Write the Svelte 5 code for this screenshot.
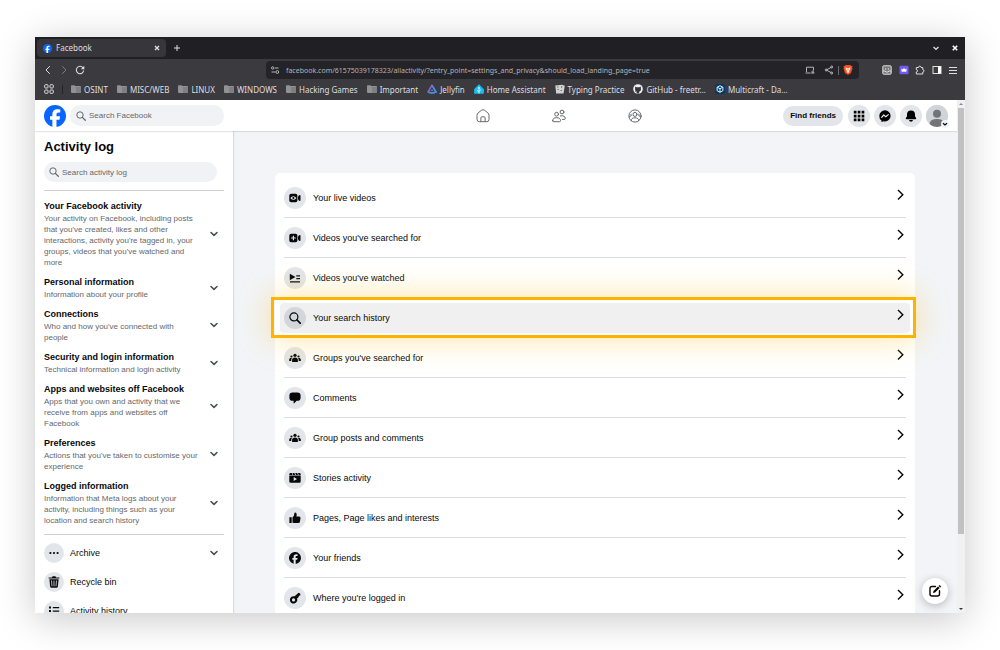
<script>
  const bookmarks = [
    { label: 'OSINT', icon: 'folder' },
    { label: 'MISC/WEB', icon: 'folder' },
    { label: 'LINUX', icon: 'folder' },
    { label: 'WINDOWS', icon: 'folder' },
    { label: 'Hacking Games', icon: 'folder' },
    { label: 'Important', icon: 'folder' },
    { label: 'Jellyfin', icon: 'jellyfin' },
    { label: 'Home Assistant', icon: 'home-assistant' },
    { label: 'Typing Practice', icon: 'typing' },
    { label: 'GitHub - freetr…', icon: 'github' },
    { label: 'Multicraft - Da…', icon: 'multicraft' }
  ];

  const sections = [
    {
      title: 'Your Facebook activity',
      text: "Your activity on Facebook, including posts that you've created, likes and other interactions, activity you're tagged in, your groups, videos that you've watched and more"
    },
    { title: 'Personal information', text: 'Information about your profile' },
    { title: 'Connections', text: "Who and how you've connected with people" },
    { title: 'Security and login information', text: 'Technical information and login activity' },
    {
      title: 'Apps and websites off Facebook',
      text: 'Apps that you own and activity that we receive from apps and websites off Facebook'
    },
    { title: 'Preferences', text: "Actions that you've taken to customise your experience" },
    {
      title: 'Logged information',
      text: 'Information that Meta logs about your activity, including things such as your location and search history'
    }
  ];

  const shortcuts = [
    { label: 'Archive', icon: 'dots', expandable: true },
    { label: 'Recycle bin', icon: 'trash' },
    { label: 'Activity history', icon: 'list' }
  ];

  const rows = [
    { label: 'Your live videos', icon: 'live' },
    { label: "Videos you've searched for", icon: 'video-plus' },
    { label: "Videos you've watched", icon: 'watched' },
    { label: 'Your search history', icon: 'search', active: true },
    { label: "Groups you've searched for", icon: 'groups' },
    { label: 'Comments', icon: 'comment' },
    { label: 'Group posts and comments', icon: 'groups' },
    { label: 'Stories activity', icon: 'stories' },
    { label: 'Pages, Page likes and interests', icon: 'like' },
    { label: 'Your friends', icon: 'facebook' },
    { label: "Where you're logged in", icon: 'key' }
  ];
</script>

{#snippet glyph(name)}
  <svg class="glyph" viewBox="0 0 12 12" aria-hidden="true">
    {#if name === 'live'}
      <path fill-rule="evenodd" d="M2.1 1.7h4.5a1.8 1.8 0 0 1 1.8 1.8v5a1.8 1.8 0 0 1-1.8 1.8H2.1A1.8 1.8 0 0 1 .3 8.500v-5a1.800 1.800 0 0 1 1.800-1.800zM1.300 6Q4.400 2.300 7.500 6 4.400 9.700 1.300 6z" />
      <circle cx="4.400" cy="6" r="1.100" />
      <path d="M9 5q.2-1.600 1.700-2 .8-.1.800.7v4.600q0 .8-.8.700Q9.200 8.600 9 7z" />
    {:else if name === 'video-plus'}
      <path fill-rule="evenodd" d="M2.100 1.700h4.500a1.800 1.800 0 0 1 1.800 1.800v5a1.800 1.800 0 0 1-1.800 1.800H2.100A1.800 1.800 0 0 1 .3 8.500v-5a1.800 1.800 0 0 1 1.800-1.800zM3.800 3.700v1.700H2.100v1.200h1.700v1.700H5V6.600h1.700V5.400H5V3.700z" />
      <path d="M9 5q.2-1.600 1.700-2 .8-.1.800.7v4.600q0 .8-.8.700Q9.200 8.600 9 7z" />
    {:else if name === 'watched'}
      <path d="M.8 1.800 6.500 5 .8 8.200zM7.300 3.300h3.700v1.200H7.300zM7.300 6h3.700v1.200H7.300zM1 9.200h10v1.300H1z" />
    {:else if name === 'search'}
      <circle cx="4.900" cy="4.900" r="4" fill="none" stroke="currentColor" stroke-width="1.200" />
      <path d="m7.900 7.900 3.500 3.500" stroke="currentColor" stroke-width="1.600" stroke-linecap="round" />
    {:else if name === 'groups'}
      <circle cx="6" cy="3.300" r="1.600" />
      <circle cx="2.500" cy="4.500" r="1.100" />
      <circle cx="9.500" cy="4.500" r="1.100" />
      <path d="M3.100 10V8a2.900 2.500 0 0 1 5.800 0v2zM.2 9V7.600c0-1.300 1.200-2 2.700-1.500C2.300 6.900 2.300 8 2.300 9zM11.800 9V7.600c0-1.300-1.200-2-2.700-1.500.6.800.6 1.900.6 2.900z" />
    {:else if name === 'comment'}
      <path d="M3.500.6h5A3.100 3.100 0 0 1 11.600 3.700v2A3.100 3.100 0 0 1 8.500 8.800H7.700L5.200 11.300q-.6.500-.6-.2V8.800H3.500A3.100 3.100 0 0 1 .4 5.700v-2A3.100 3.100 0 0 1 3.500.6z" />
    {:else if name === 'stories'}
      <path d="M.3 2.900V2.500q0-1.400 1.400-1.400h1l.8 1.800zM3.400 1.100h2l.8 1.800h-2zM6.200 1.100h2l.8 1.800H7zM8.900 1.100h1.400q1.400 0 1.400 1.400v.4h-2z" />
      <path fill-rule="evenodd" d="M.3 3.400h11.400v6q0 1.400-1.400 1.400H1.700Q.3 10.800.3 9.400zM4.700 5v4L8 7z" />
    {:else if name === 'like'}
      <path d="M.4 5.200h2.300v5.900H.9q-.5 0-.5-.5zM3.500 5.300q1.800-1 1.800-3.500 0-1.400.9-1.400 1.500 0 1.500 2.300 0 .9-.3 1.800h2.800q1.500 0 1.300 1.500l-.5 3.500q-.2 1.600-1.700 1.600h-4q-1 0-1.800-.7z" />
    {:else if name === 'facebook'}
      <path d="M12 6A6 6 0 1 0 4.600 11.800V7.800H3.300V6h1.300V5.200C4.600 3.200 5.500 2.300 7.400 2.300c.4 0 1 .1 1.200.2v1.600H7.900c-.9 0-1.300.4-1.300 1.300V6h2l-.4 1.800H6.700V12A6 6 0 0 0 12 6z" />
    {:else if name === 'key'}
      <path fill-rule="evenodd" d="m5.600 4.300 3.700-3.300q.5-.4 1 0l1.100 1-.2 1.500-1.400.2-.1 1.300-1.700 1.400a3.700 3.700 0 1 1-2.400-2.100zM4.500 6.300a1.600 1.600 0 1 0 .1 3.200 1.600 1.600 0 0 0-.1-3.200z" />
    {:else if name === 'dots'}
      <circle cx="2.400" cy="6" r="1.100" />
      <circle cx="6" cy="6" r="1.100" />
      <circle cx="9.600" cy="6" r="1.100" />
    {:else if name === 'trash'}
      <path d="M4 1.500Q4 .3 5.200.3h1.600Q8 .3 8 1.500h3q.5 0 .5.500t-.5.500H1q-.5 0-.5-.5T1 1.500z" />
      <path fill-rule="evenodd" d="M1.400 3.200h9.200l-.7 7q-.1 1.500-1.500 1.500H3.600q-1.400 0-1.500-1.500zM3.200 4.500l.4 5.700h.8L4 4.500zM5.600 4.500v5.700h.8V4.500zM8 4.500l-.4 5.700h.8l.4-5.700z" />
    {:else if name === 'list'}
      <path d="M1 1.600h2v2H1zM1 5h2v2H1zM1 8.400h2v2H1zM4.800 2h6.400v1.300H4.800zM4.800 5.400h6.400v1.300H4.800zM4.800 8.800h6.400v1.300H4.800z" />
    {/if}
  </svg>
{/snippet}

{#snippet favicon(name)}
  <svg class="favicon" viewBox="0 0 10 10" aria-hidden="true">
    {#if name === 'folder'}
      <path d="M0 2q0-.8.800-.8h2.600l1 .9h4.800q.8 0 .8.800v5.200q0 .8-.8.800H.8q-.8 0-.8-.8z" fill="#929295" />
      <path d="M5 3h5v5.100q0 .8-.8.800H5z" fill="#808083" />
    {:else if name === 'jellyfin'}
      <path d="M5 1.200 9 8Q5 9.600 1 8z" fill="none" stroke="#8a68cc" stroke-width="1.500" stroke-linejoin="round" />
      <path d="M6 3 9 8Q5 9.600 2 8.400" fill="none" stroke="#3a92dc" stroke-width="1.500" stroke-linecap="round" />
      <path d="m5 4.900 1.300 2.200H3.700z" fill="#7a72d8" />
    {:else if name === 'home-assistant'}
      <path d="M5 .3 9.900 5.200V9q0 .8-.8.800H.9Q.1 9.800.1 9V5.200z" fill="#18bcf2" />
      <path d="M5 9.500V4.500M5 8 2.900 6.200M5 7.300l2-1.700" stroke="#e9f9ff" stroke-width=".8" />
      <circle cx="5" cy="3.900" r=".9" fill="#e9f9ff" />
    {:else if name === 'typing'}
      <path d="M.3 1.500 7 .7l2.800 1-1.300 7.800H1.200z" fill="#d2d2d2" />
      <path d="M2 2.500h1.500v1H2zM6 2.200h1.200v1.500H6zM2.300 5h1.500v1H2.300zM5.500 6h1.500v1H5.500z" fill="#777" />
    {:else if name === 'github'}
      <circle cx="5" cy="5" r="4.800" fill="#f2f2f2" />
      <path d="M3.900 9.400V7.700C2.300 7.200 1.800 6.100 2.100 4.500l.1-1.900 1.600.6h2.400l1.600-.6.1 1.900c.3 1.600-.2 2.700-1.800 3.200v1.700z" fill="#37363b" />
      <path d="M2 7.200q.8.100 1 .8l.9.300" fill="none" stroke="#37363b" stroke-width=".6" />
    {:else if name === 'multicraft'}
      <rect width="10" height="10" rx="1.500" fill="#073b67" />
      <path d="m5 1.700 2.900 1.500v3.500L5 8.300 2.100 6.700V3.200zM2.100 3.200 5 4.700l2.900-1.500M5 4.700v3.500" fill="none" stroke="#dff0fb" stroke-width="1" />
    {/if}
  </svg>
{/snippet}

{#snippet chevronDown()}
  <svg class="chevron-down" viewBox="0 0 10 10" aria-hidden="true">
    <path d="m2 3.500 3 2.900 3-2.900" fill="none" stroke="currentColor" stroke-width="1.600" stroke-linecap="round" stroke-linejoin="round" />
  </svg>
{/snippet}

{#snippet facebookLogo()}
  <svg class="logo" viewBox="0 0 36 36" aria-hidden="true">
    <circle cx="18" cy="18" r="18" fill="#0866ff" />
    <path d="M13.700 35.500V24h-3.800v-5.500h3.800v-2.400c0-6.200 2.800-9.100 8.900-9.100 1.200 0 3.200.2 4 .4v5c-.4 0-1.200-.1-2.100-.1-3 0-4.100 1.100-4.100 4v2.200h5.900l-1 5.500h-4.900v11.800a18 18 0 0 1-6.700-.3z" fill="#fff" />
  </svg>
{/snippet}

{#snippet searchIcon()}
  <svg class="search-icon" viewBox="0 0 10 10" aria-hidden="true">
    <circle cx="4" cy="4" r="3.200" fill="none" stroke="currentColor" stroke-width="1" />
    <path d="m6.400 6.400 2.900 2.900" stroke="currentColor" stroke-width="1.300" stroke-linecap="round" />
  </svg>
{/snippet}

<div class="desktop">
  <div class="window">
    <div class="tabbar">
      <div class="tab">
        {@render facebookLogo()}
        <span class="tab-title">Facebook</span>
        <button class="bare" aria-label="Close tab">
          <svg viewBox="0 0 10 10"><path d="m3 3 4 4M7 3 3 7" stroke-width="1.400" /></svg>
        </button>
      </div>
      <button class="bare new-tab" aria-label="New tab">
        <svg viewBox="0 0 10 10"><path d="M5 2v6M2 5h6" /></svg>
      </button>
      <div class="window-controls">
        <button class="bare" aria-label="Minimise">
          <svg viewBox="0 0 10 10"><path d="m2.500 4 2.500 2.300L7.500 4" stroke-width="1.300" /></svg>
        </button>
        <button class="bare" aria-label="Close window">
          <svg viewBox="0 0 10 10"><path d="m2.800 2.800 4.400 4.400M7.200 2.800 2.800 7.200" stroke="#fff" stroke-width="1.600" /></svg>
        </button>
      </div>
    </div>

    <div class="toolbar">
      <div class="nav-buttons">
        <button class="bare" aria-label="Back">
          <svg viewBox="0 0 10 10"><path d="M6.800 1.200 3 5l3.800 3.800" /></svg>
        </button>
        <button class="bare faded" aria-label="Forward">
          <svg viewBox="0 0 10 10"><path d="M3.200 1.200 7 5 3.200 8.800" /></svg>
        </button>
        <button class="bare" aria-label="Reload">
          <svg viewBox="0 0 10 10"><path d="M8 2.800A3.700 3.700 0 1 0 8.700 5.500" stroke-width="1.100" /><path d="M9.300.8v3.400H5.900z" fill="currentColor" stroke="none" /></svg>
        </button>
      </div>
      <div class="address">
        <svg class="small-icon" viewBox="0 0 10 10" aria-hidden="true">
          <circle cx="2.700" cy="3" r="1.200" />
          <path d="M4.800 3h3.700M1.500 7h3.700" />
          <circle cx="7.300" cy="7" r="1.400" />
        </svg>
        <input
          class="url"
          type="text"
          aria-label="Address"
          value="facebook.com/61575039178323/allactivity/?entry_point=settings_and_privacy&should_load_landing_page=true"
        />
        <button class="bare" aria-label="Install app">
          <svg viewBox="0 0 10 10"><path d="M1.500 7V2.200h7v3.300M.5 8h5M6 8h3.500M7.800 5.500v2M6.700 6.500l1.100 1.200 1.200-1.200" /></svg>
        </button>
        <button class="bare share" aria-label="Share">
          <svg viewBox="0 0 10 10"><path d="M7.500 2.200 2.300 5l5.200 2.800" /><circle cx="7.700" cy="2" r="1" /><circle cx="2.200" cy="5" r="1" /><circle cx="7.700" cy="8" r="1" /></svg>
        </button>
        <span class="divider"></span>
        <button class="bare" aria-label="Brave Shields">
          <svg viewBox="0 0 10 10">
            <path d="M2.600 0h4.800l.9 1 1.200.1L9.100 2.800l.3.900-1.400 4.200L5 10 2 7.900.6 3.700l.3-.9L.5 1.100 1.700 1z" fill="#f5501e" stroke="none" />
            <path d="m2.500 2.600 2.500.6 2.500-.6L7 5 5.600 6.100l.8.800L5 7.900l-1.400-1 .8-.8L3 5z" fill="#fff" stroke="none" />
            <path d="m3.600 3.900 1 .3M6.400 3.900l-1 .3M5 4.200v1.500" stroke="#f5501e" stroke-width=".6" />
          </svg>
        </button>
      </div>
      <div class="extensions">
        <button class="bare" aria-label="Archive extension">
          <svg viewBox="0 0 10 10"><rect x=".8" y=".8" width="8.400" height="8.400" rx="1" fill="#77777a" /><path d="M1 6h2l1 1h2l1-1h2" /><path d="M3 3.500h1.200v1H3zM5.800 3.500H7v1H5.800z" fill="#fff" stroke="none" /></svg>
        </button>
        <button class="bare" aria-label="Crown extension">
          <svg viewBox="0 0 10 10"><rect x=".5" y=".8" width="9" height="8.400" rx="1" fill="#7359f8" stroke="none" /><path d="m2.200 3.400 1.400 1L5 2.900l1.400 1.500 1.400-1-.5 3.400H2.700z" fill="#fff" stroke="none" /></svg>
        </button>
        <button class="bare" aria-label="Extensions">
          <svg viewBox="0 0 10 10"><path d="M1.300 2.500h2.200a1.300 1.300 0 1 1 2.600 0h1.700v2.100a1.200 1.200 0 1 1 0 2.400v2H1.300V7a1.200 1.200 0 0 0 0-2.400z" /></svg>
        </button>
        <button class="bare" aria-label="Side panel">
          <svg viewBox="0 0 10 10"><rect x="1" y="1.500" width="8" height="7" /><path d="M6 1.500h3v7H6z" fill="#fff" stroke="none" /></svg>
        </button>
        <button class="bare" aria-label="Menu">
          <svg viewBox="0 0 10 10"><path d="M1 2.500h8M1 5.500h8M1 8.500h8" /></svg>
        </button>
      </div>
    </div>

    <div class="bookmarks">
      <button class="bare" aria-label="All bookmarks">
        <svg viewBox="0 0 10 10"><rect x=".7" y=".7" width="3.300" height="3.300" rx=".8" /><rect x="6" y=".7" width="3.300" height="3.300" rx=".8" /><rect x=".7" y="6" width="3.300" height="3.300" rx=".8" /><rect x="6" y="6" width="3.300" height="3.300" rx=".8" /></svg>
      </button>
      <span class="bookmarks-divider"></span>
      {#each bookmarks as item}
        <a class="bookmark" href="#bookmark">{@render favicon(item.icon)}{item.label}</a>
      {/each}
    </div>

    <div class="viewport">
      <div class="page">
        <header class="header">
          <a class="home-link" href="#home" aria-label="Facebook">{@render facebookLogo()}</a>
          <label class="search header-search">
            {@render searchIcon()}
            <input type="search" placeholder="Search Facebook" aria-label="Search Facebook" />
          </label>
          <nav class="main-nav">
            <a href="#home" aria-label="Home">
              <svg viewBox="0 0 14 14"><path d="M1 6.200q0-1.400 1.100-2.300L5.600 1.200q1.400-1 2.800 0l3.500 2.700Q13 4.800 13 6.200v4.300q0 2.200-2.200 2.200H3.200Q1 12.700 1 10.500z" /><path d="M4.900 12.500V8.800q0-1 1-1h2.200q1 0 1 1v3.700" /></svg>
            </a>
            <a href="#friends" aria-label="Friends">
              <svg viewBox="0 0 14 14"><circle cx="4.600" cy="5.200" r="1.900" /><circle cx="10" cy="3" r="1.900" /><path d="M.7 11.700c0-2 1.300-3 3.900-3s3.900 1 3.900 3q0 1-1 1H1.700q-1 0-1-1zM8.400 6.900c3-.5 4.900.5 4.900 2.500q0 1-1 1h-1.800" /></svg>
            </a>
            <a href="#groups" aria-label="Groups">
              <svg viewBox="0 0 14 14"><circle cx="7" cy="7" r="6.100" /><circle cx="7" cy="5.400" r="2" /><path d="M3.200 11.700c0-2 1.500-2.900 3.800-2.900s3.800.9 3.800 2.900M3.300 5q-1 .8 0 1.700-1.500.3-2.200 1.300M10.700 5q1 .8 0 1.700 1.500.3 2.200 1.300" /></svg>
            </a>
          </nav>
          <div class="header-actions">
            <button class="find-friends">Find friends</button>
            <button class="round" aria-label="Menu">
              <svg viewBox="0 0 12 12"><path d="M.8.800h2.700v2.700H.8zM4.700.800h2.700v2.700H4.700zM8.600.800h2.700v2.700H8.600zM.8 4.700h2.700v2.700H.8zM4.700 4.700h2.700v2.700H4.700zM8.600 4.700h2.700v2.700H8.600zM.8 8.600h2.700v2.700H.8zM4.700 8.600h2.700v2.700H4.700zM8.600 8.600h2.700v2.700H8.600z" /></svg>
            </button>
            <button class="round" aria-label="Messenger">
              <svg viewBox="0 0 12 12"><path d="M6 .3a5.600 5.600 0 0 1 0 11.200q-.9 0-1.600-.2l-1.500.6q-.4.100-.4-.3l-.1-1.100A5.500 5.500 0 0 1 .3 5.900 5.600 5.600 0 0 1 6 .3z" /><path d="m2.700 7.300 2-2.300 2.100 1.700 2.500-2.100" fill="none" stroke="#e2e5e9" stroke-width="1.200" stroke-linejoin="round" stroke-linecap="round" /></svg>
            </button>
            <button class="round" aria-label="Notifications">
              <svg viewBox="0 0 12 12"><path d="M2 4.400a4 4 0 0 1 8 0v1.900l1.100 1.800q.5 1.200-.8 1.200H1.700Q.4 9.300.9 8.100L2 6.300zM4 10h4q-.3 1.700-2 1.700T4 10z" /></svg>
            </button>
            <button class="round" aria-label="Your profile">
              <svg class="person" viewBox="0 0 22 22"><circle cx="11" cy="11" r="11" fill="#d0d3d8" /><circle cx="11" cy="8.700" r="4" fill="#727477" /><path d="M3.500 19q.5-5 7.500-5t7.500 5A11 11 0 0 1 3.500 19z" fill="#727477" /></svg>
              <span class="avatar-badge">
                <svg class="avatar-chevron" viewBox="0 0 8 8"><path d="M2 3.200 4 5l2-1.800" /></svg>
              </span>
            </button>
          </div>
        </header>

        <div class="content">
          <aside class="sidebar">
            <h1>Activity log</h1>
            <label class="search">
              {@render searchIcon()}
              <input type="search" placeholder="Search activity log" aria-label="Search activity log" />
            </label>
            <hr />
            <div class="sections">
              {#each sections as section}
                <button class="section">
                  <span class="section-body">
                    <span class="section-title">{section.title}</span>
                    <span class="section-text">{section.text}</span>
                  </span>
                  {@render chevronDown()}
                </button>
              {/each}
            </div>
            <hr />
            <div class="shortcuts">
              {#each shortcuts as item}
                <button class="shortcut">
                  <span class="badge badge--small">{@render glyph(item.icon)}</span>
                  <span class="shortcut-label">{item.label}</span>
                  {#if item.expandable}
                    {@render chevronDown()}
                  {/if}
                </button>
              {/each}
            </div>
          </aside>

          <main class="main">
            <div class="card">
              {#each rows as row}
                <a class="row" class:row--active={row.active} href="#activity">
                  <span class="badge">{@render glyph(row.icon)}</span>
                  <span class="row-label">{row.label}</span>
                  <svg class="chevron-right" viewBox="0 0 12 12" aria-hidden="true">
                    <path d="M4 1 8.800 5.700 4 10.500" />
                  </svg>
                </a>
              {/each}
            </div>
          </main>
        </div>
      </div>

      <div class="scrollbar">
        <svg viewBox="0 0 8 8"><path d="m2 5 2-2 2 2z" fill="#888" /></svg>
        <div class="thumb"></div>
        <svg viewBox="0 0 8 8"><path d="m2 3 2 2 2-2z" fill="#333" /></svg>
      </div>

      <button class="compose" aria-label="New message">
        <svg viewBox="0 0 14 14"><path d="M7.500 2.500H4Q2 2.500 2 4.500V10q0 2 2 2h5.500q2 0 2-2V6.800" fill="none" stroke="currentColor" stroke-width="1.400" stroke-linecap="round" /><path d="m5 9 .5-2L10 2.500 11.600 4 7 8.600zM10.600 1.900l.6-.6q.5-.3 1 .1l.5.500q.4.500 0 1l-.6.600z" /></svg>
      </button>
    </div>
  </div>
</div>

<style>
  :global(body) {
    margin: 0;
    background: #fff;
  }

  .desktop {
    box-sizing: border-box;
    height: 100vh;
    padding: 37px 35px;
    font-family: 'Liberation Sans', Arial, sans-serif;
    color: #080809;
  }

  .window {
    display: flex;
    flex-direction: column;
    height: 100%;
    overflow: hidden;
    box-shadow: 0 6px 36px rgba(0, 0, 0, 0.22);
  }

  button,
  input {
    padding: 0;
    border: 0;
    background: none;
    font-family: inherit;
    color: inherit;
  }

  button {
    cursor: pointer;
  }

  a {
    color: inherit;
    text-decoration: none;
  }

  svg {
    display: block;
    flex: none;
  }

  /* Browser chrome */
  .tabbar,
  .toolbar,
  .bookmarks {
    display: flex;
    align-items: center;
    flex: none;
    font-family: 'Noto Sans', sans-serif;
    font-size: 8px;
    color: #dedee0;
  }

  .tabbar {
    height: 22px;
    background: #202024;
  }

  .tab {
    display: flex;
    align-items: center;
    gap: 4px;
    box-sizing: border-box;
    width: 129px;
    height: 18px;
    margin-left: 2px;
    padding: 0 4px 0 6px;
    border-radius: 4px;
    background: #37363b;
    line-height: 10px;
  }

  .tab .logo {
    width: 9px;
    height: 9px;
  }

  .tab-title {
    flex: 1;
  }

  .bare svg,
  .small-icon {
    width: 10px;
    height: 10px;
    fill: none;
    stroke: currentColor;
    stroke-width: 1;
  }

  .new-tab {
    margin-left: 6px;
  }

  .window-controls {
    display: flex;
    gap: 9px;
    margin-left: auto;
    padding-right: 5px;
  }

  .toolbar {
    height: 22px;
    background: #3b3a3f;
  }

  .nav-buttons {
    display: flex;
    gap: 6px;
    box-sizing: border-box;
    width: 231px;
    padding-left: 8px;
  }

  .faded {
    opacity: 0.4;
  }

  .address {
    display: flex;
    align-items: center;
    flex: 1;
    height: 18px;
    padding: 0 6px 0 4px;
    border-radius: 4px;
    background: #242328;
    color: #b4b4b8;
  }

  .url {
    flex: 1;
    min-width: 0;
    margin-left: 6px;
    font-size: 7px;
  }

  .share {
    margin-left: 9px;
  }

  .divider {
    width: 1px;
    height: 9px;
    margin: 0 4px;
    background: #6c6c70;
  }

  .extensions {
    display: flex;
    justify-content: space-between;
    box-sizing: border-box;
    width: 106px;
    padding: 0 7px 0 23px;
  }

  .bookmarks {
    gap: 9px;
    box-sizing: border-box;
    height: 19px;
    padding: 0 9px 3px;
    background: #3b3a3f;
    white-space: nowrap;
    overflow: hidden;
  }

  .bookmarks-divider {
    width: 1px;
    height: 9px;
    margin: 0 -1px;
    background: #242328;
  }

  .bookmark {
    display: flex;
    align-items: center;
    gap: 3px;
  }

  .favicon {
    width: 10px;
    height: 10px;
  }

  /* Page */
  .viewport {
    position: relative;
    display: flex;
    flex: 1;
    min-height: 0;
    background: #f2f4f7;
  }

  .page {
    display: flex;
    flex-direction: column;
    flex: 1;
    min-width: 0;
  }

  .header {
    display: flex;
    align-items: center;
    flex: none;
    z-index: 1;
    height: 31px;
    padding: 0 9px;
    background: #fff;
    box-shadow: 0 1px 1px rgba(0, 0, 0, 0.1);
  }

  .home-link .logo {
    width: 22px;
    height: 22px;
  }

  .search {
    display: flex;
    align-items: center;
    gap: 3px;
    box-sizing: border-box;
    height: 20px;
    padding: 0 6px;
    border-radius: 10px;
    background: #f0f2f5;
    color: #65686c;
  }

  .search input {
    flex: 1;
    min-width: 0;
    font-size: 8px;
    outline: none;
  }

  .search input::placeholder {
    color: #65686c;
  }

  .search-icon {
    width: 10px;
    height: 10px;
  }

  .header-search {
    width: 154px;
    height: 21px;
    margin-left: 4px;
    border-radius: 11px;
  }

  .main-nav {
    display: flex;
    justify-content: center;
    flex: 1;
    padding-left: 111px;
  }

  .main-nav a {
    display: flex;
    justify-content: center;
    width: 76px;
  }

  .main-nav svg {
    width: 14px;
    height: 14px;
    fill: none;
    stroke: #65686c;
    stroke-width: 1;
    stroke-linecap: round;
  }

  .header-actions {
    display: flex;
    align-items: center;
    gap: 4px;
  }

  .find-friends {
    height: 20px;
    margin-right: 1px;
    padding: 0 7px;
    border-radius: 10px;
    background: #e2e5e9;
    font-size: 8px;
    font-weight: 700;
  }

  .round {
    position: relative;
    display: flex;
    align-items: center;
    justify-content: center;
    width: 22px;
    height: 22px;
    border-radius: 50%;
    background: #e2e5e9;
  }

  .round svg {
    width: 12px;
    height: 12px;
  }

  .round .person {
    width: 22px;
    height: 22px;
  }

  .avatar-badge {
    position: absolute;
    right: -1px;
    bottom: -1px;
    border-radius: 50%;
    background: #f0f2f5;
  }

  .round .avatar-chevron {
    width: 8px;
    height: 8px;
    fill: none;
    stroke: currentColor;
    stroke-width: 1.3;
  }

  .content {
    display: flex;
    flex: 1;
    min-height: 0;
  }

  /* Sidebar */
  .sidebar {
    box-sizing: border-box;
    width: 198px;
    flex: none;
    padding: 7px 9px 0;
    overflow: hidden;
    background: #fff;
    box-shadow: 1px 0 1px rgba(0, 0, 0, 0.1);
  }

  h1 {
    margin: 0 0 6px;
    font-size: 13px;
    line-height: 18px;
  }

  .sidebar .search {
    margin-right: 7px;
    padding-left: 5px;
  }

  hr {
    margin: 8px 0;
    border: 0;
    border-top: 1px solid #ced0d4;
  }

  .sections {
    display: flex;
    flex-direction: column;
    gap: 7px;
  }

  .section,
  .shortcut {
    display: flex;
    align-items: center;
    justify-content: space-between;
    padding-right: 5px;
    text-align: left;
  }

  .section-body {
    width: 155px;
  }

  .section-title,
  .section-text {
    display: block;
  }

  .section-title {
    font-size: 9px;
    font-weight: 700;
    line-height: 14px;
    white-space: nowrap;
  }

  .section-text {
    font-size: 8px;
    line-height: 11px;
    color: #65686c;
  }

  .chevron-down {
    width: 10px;
    height: 10px;
    color: #4b4f56;
  }

  .shortcuts {
    display: flex;
    flex-direction: column;
    gap: 9px;
  }

  .shortcut-label {
    flex: 1;
    margin-left: 6px;
    font-size: 9px;
  }

  /* Activity list */
  .main {
    flex: 1;
    min-width: 0;
    padding: 42px 42px 0;
    overflow: hidden;
  }

  .card {
    padding: 5px 9px;
    border-radius: 5px;
    background: #fff;
  }

  .row {
    position: relative;
    display: flex;
    align-items: center;
    box-sizing: border-box;
    height: 40px;
    border-bottom: 1px solid #dadde1;
  }

  .badge {
    display: flex;
    align-items: center;
    justify-content: center;
    flex: none;
    width: 22px;
    height: 22px;
    border-radius: 50%;
    background: #e2e5e9;
  }

  .badge--small {
    width: 20px;
    height: 20px;
  }

  .glyph {
    width: 12px;
    height: 12px;
    fill: currentColor;
  }

  .row-label {
    flex: 1;
    margin-left: 7px;
    font-size: 9px;
  }

  .chevron-right {
    width: 12px;
    height: 12px;
    margin-bottom: 6px;
    fill: none;
    stroke: currentColor;
    stroke-width: 1.4;
  }

  .row--active {
    z-index: 1;
    border-bottom: 0;
  }

  .row--active .badge {
    background: #d3d6da;
  }

  .row--active::before {
    content: '';
    position: absolute;
    z-index: -1;
    inset: 5px -4px;
    border-radius: 4px;
    background: #f0f0f0;
  }

  .row--active::after {
    content: '';
    position: absolute;
    inset: -1px -10px 0 -13px;
    border: 3px solid #ffb200;
    box-shadow: 0 0 32px rgba(255, 190, 20, 0.4);
  }

  /* Scrollbar and floating button */
  .scrollbar {
    display: flex;
    flex-direction: column;
    align-items: center;
    width: 8px;
    background: #f1f1f1;
  }

  .scrollbar svg {
    width: 8px;
    height: 8px;
  }

  .thumb {
    width: 6px;
    height: 83%;
    margin-bottom: auto;
    background: #c1c1c1;
  }

  .compose {
    position: absolute;
    right: 17px;
    bottom: 9px;
    display: flex;
    align-items: center;
    justify-content: center;
    width: 26px;
    height: 26px;
    border-radius: 50%;
    background: #fff;
    box-shadow: 0 2px 8px rgba(0, 0, 0, 0.25);
  }

  .compose svg {
    width: 14px;
    height: 14px;
  }
</style>
